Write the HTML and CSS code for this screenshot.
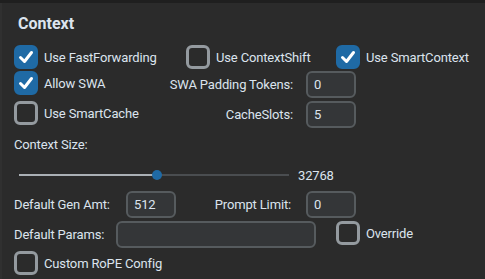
FILE: index.html
```html
<!DOCTYPE html>
<html lang="en-US">
<head>
<meta charset="UTF-8" />
<title>Context Settings</title>
<link rel="stylesheet" href="styles.css">
</head>
<body>
    <div class="panel">
        <div class="title">Context</div>

        <div class="row row-checks">
            <label class="check check-wide checked">
                <span class="box"><svg viewBox="0 0 24 24" width="24" height="24"><polyline points="6.5,12.5 10.5,16.5 17.5,7.5"></polyline></svg></span>
                <span>Use FastForwarding</span>
            </label>
            <label class="check check-mid">
                <span class="box"></span>
                <span>Use ContextShift</span>
            </label>
            <label class="check checked">
                <span class="box"><svg viewBox="0 0 24 24" width="24" height="24"><polyline points="6.5,12.5 10.5,16.5 17.5,7.5"></polyline></svg></span>
                <span>Use SmartContext</span>
            </label>
        </div>

        <div class="row row-field">
            <label class="check check-left checked">
                <span class="box"><svg viewBox="0 0 24 24" width="24" height="24"><polyline points="6.5,12.5 10.5,16.5 17.5,7.5"></polyline></svg></span>
                <span>Allow SWA</span>
            </label>
            <span class="field-label">SWA Padding Tokens:</span>
            <span class="entry entry-small">0</span>
        </div>

        <div class="row row-field row-cache">
            <label class="check check-left">
                <span class="box"></span>
                <span>Use SmartCache</span>
            </label>
            <span class="field-label">CacheSlots:</span>
            <span class="entry entry-small">5</span>
        </div>

        <div class="caption">Context Size:</div>

        <div class="row row-slider">
            <div class="slider">
                <div class="slider-fill" style="width: 51%"></div>
                <div class="slider-thumb" style="left: 51%"></div>
            </div>
            <span class="slider-value">32768</span>
        </div>

        <div class="row row-gen">
            <span class="gen-label">Default Gen Amt:</span>
            <span class="entry entry-small">512</span>
            <span class="field-label prompt-label">Prompt Limit:</span>
            <span class="entry entry-small">0</span>
        </div>

        <div class="row row-params">
            <span class="params-label">Default Params:</span>
            <span class="entry entry-wide"></span>
            <label class="check check-override">
                <span class="box"></span>
                <span>Override</span>
            </label>
        </div>

        <div class="row row-rope">
            <label class="check">
                <span class="box"></span>
                <span>Custom RoPE Config</span>
            </label>
        </div>
    </div>
</body>
</html>
```

FILE: styles.css
```css
*{
    box-sizing: border-box;
}
html, body{
    margin: 0;
    padding: 0;
}
body{
    background-color: #1f1f1f;
    padding-top: 3px;
    font-family: Roboto, "Liberation Sans", Arial, sans-serif;
    font-size: 13px;
    letter-spacing: -0.15px;
    color: #dce4ee;
    height: 279px;
    overflow: hidden;
}
.panel{
    background-color: #2b2b2b;
    border-left: 2px solid #303030;
    height: 276px;
    padding-left: 12px;
}
.title{
    font-size: 16px;
    font-weight: bold;
    letter-spacing: 0;
    height: 20px;
    line-height: 20px;
    padding-top: 11px;
    box-sizing: content-box;
    padding-left: 4px;
}
.row{
    display: flex;
    align-items: flex-start;
}
.row-checks{
    margin-top: 11px;
}
.row-field{
    margin-top: 2px;
}
.row-cache{
    margin-top: 3px;
}

/* checkboxes */
.check{
    display: flex;
    align-items: center;
    height: 24px;
    gap: 6px;
}
.check-wide{
    width: 172px;
}
.check-mid{
    width: 150px;
}
.check-left{
    width: 152px;
}
.box{
    width: 24px;
    height: 24px;
    border: 3px solid #949a9f;
    border-radius: 6px;
    flex: none;
}
.checked .box{
    background-color: #1f6aa5;
    border-color: #1f6aa5;
    position: relative;
}
.box svg{
    position: absolute;
    left: -3px;
    top: -3px;
}
.box polyline{
    fill: none;
    stroke: #ffffff;
    stroke-width: 3;
    stroke-linecap: round;
    stroke-linejoin: round;
}

/* entries */
.field-label{
    width: 140px;
    height: 27px;
    line-height: 27px;
    text-align: right;
    padding-right: 13px;
}
.entry{
    height: 27px;
    line-height: 23px;
    background-color: #343638;
    border: 2px solid #565b5e;
    border-radius: 6px;
    padding-left: 6px;
}
.entry-small{
    width: 50px;
}
.entry-wide{
    width: 200px;
}

.caption{
    margin-top: 8px;
    height: 18px;
    line-height: 18px;
}

/* slider */
.row-slider{
    margin-top: 11px;
    height: 20px;
    align-items: center;
}
.slider{
    position: relative;
    margin-left: 5px;
    width: 270px;
    height: 2px;
    background-color: #4a4d50;
}
.slider-fill{
    height: 2px;
    background-color: #aab0b5;
}
.slider-thumb{
    position: absolute;
    top: -4px;
    width: 10px;
    height: 10px;
    margin-left: -5px;
    border-radius: 50%;
    background-color: #1f6aa5;
}
.slider-value{
    margin-left: 9px;
}

.row-gen{
    margin-top: 6px;
}
.gen-label{
    width: 112px;
    line-height: 27px;
}
.prompt-label{
    width: 130px;
    padding-right: 15px;
}
.row-params{
    margin-top: 3px;
}
.params-label{
    width: 102px;
    line-height: 27px;
}
.check-override{
    margin-left: 20px;
}
.row-rope{
    margin-top: 3px;
}
```
